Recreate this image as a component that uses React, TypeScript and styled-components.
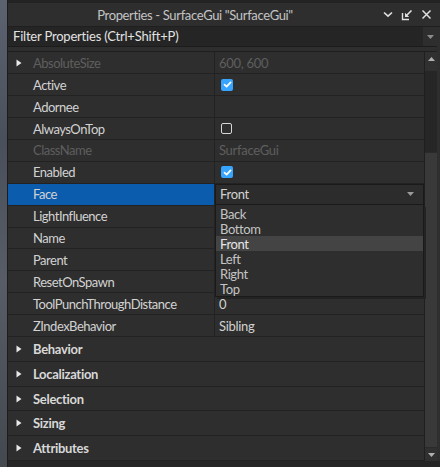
import React, { FC } from "react"
import styled, { createGlobalStyle } from "styled-components"

const GlobalStyle = createGlobalStyle`
  html, body {
    margin: 0;
    padding: 0;
    background: #262626;
    overflow: hidden;
  }
  body {
    font-family: Lato, "Open Sans", sans-serif;
    -webkit-font-smoothing: antialiased;
  }
`

interface PropRow {
  name: string
  value?: string
  check?: boolean
  disabled?: boolean
  expandable?: boolean
  selected?: boolean
  dropdown?: boolean
}

const props: PropRow[] = [
  { name: "AbsoluteSize", value: "600, 600", disabled: true, expandable: true },
  { name: "Active", check: true },
  { name: "Adornee" },
  { name: "AlwaysOnTop", check: false },
  { name: "ClassName", value: "SurfaceGui", disabled: true },
  { name: "Enabled", check: true },
  { name: "Face", value: "Front", selected: true, dropdown: true },
  { name: "LightInfluence" },
  { name: "Name" },
  { name: "Parent" },
  { name: "ResetOnSpawn" },
  { name: "ToolPunchThroughDistance", value: "0" },
  { name: "ZIndexBehavior", value: "Sibling" },
]

const categories = ["Behavior", "Localization", "Selection", "Sizing", "Attributes"]

const faceOptions = ["Back", "Bottom", "Front", "Left", "Right", "Top"]

const Caret: FC<{ color?: string }> = ({ color = "#e8e8e8" }) => (
  <svg width="6" height="8" viewBox="0 0 6 8">
    <path d="M0.5 0.5 L5.5 4 L0.5 7.5 Z" fill={color} />
  </svg>
)

const DownTri: FC<{ color?: string }> = ({ color = "#9a9a9a" }) => (
  <svg width="7" height="4" viewBox="0 0 7 4">
    <path d="M0 0 H7 L3.5 4 Z" fill={color} />
  </svg>
)

const UpTri: FC<{ color?: string }> = ({ color = "#9a9a9a" }) => (
  <svg width="7" height="4" viewBox="0 0 7 4">
    <path d="M0 4 H7 L3.5 0 Z" fill={color} />
  </svg>
)

const CheckBox: FC<{ on: boolean }> = ({ on }) =>
  on ? (
    <CheckOn>
      <svg width="11" height="11" viewBox="0 0 11 11">
        <path
          d="M2.5 5.6 L4.6 7.6 L8.6 3.4"
          stroke="#ffffff"
          strokeWidth="1.7"
          fill="none"
          strokeLinecap="round"
          strokeLinejoin="round"
        />
      </svg>
    </CheckOn>
  ) : (
    <CheckOff />
  )

const App: FC = () => {
  return (
    <Screen>
      <GlobalStyle />
      <Backdrop />
      <Panel>
        <TitleBar>
          <Title>Properties - SurfaceGui "SurfaceGui"</Title>
          <TitleIcons>
            <svg width="10" height="7" viewBox="0 0 10 7">
              <path d="M1 1.5 L5 5.2 L9 1.5" stroke="#e0e0e0" strokeWidth="1.6" fill="none" />
            </svg>
            <svg width="12" height="12" viewBox="0 0 12 12">
              <path d="M1.5 4 V10.5 H8" stroke="#e0e0e0" strokeWidth="1.4" fill="none" />
              <path d="M10.5 1.5 L5 7" stroke="#e0e0e0" strokeWidth="1.6" fill="none" />
              <path d="M4 3.8 V8 H8.2 Z" fill="#e0e0e0" />
            </svg>
            <svg width="11" height="11" viewBox="0 0 11 11">
              <path d="M1.5 1.5 L9.5 9.5 M9.5 1.5 L1.5 9.5" stroke="#e0e0e0" strokeWidth="1.5" fill="none" />
            </svg>
          </TitleIcons>
        </TitleBar>

        <Content>
          <FilterBar>
            <FilterInput>Filter Properties (Ctrl+Shift+P)</FilterInput>
            <FilterArrow>
              <DownTri color="#8a8a8a" />
            </FilterArrow>
          </FilterBar>

          <Body>
            <Grid>
              {props.map((p) => (
                <Row key={p.name}>
                  <NameCell $selected={p.selected}>
                    <Expander>{p.expandable && <Caret />}</Expander>
                    <Label $disabled={p.disabled}>{p.name}</Label>
                  </NameCell>
                  <ValueCell>
                    {p.check !== undefined && <CheckBox on={p.check} />}
                    {p.dropdown ? (
                      <Combo>
                        <Value>{p.value}</Value>
                        <DownTri />
                        <OptionList>
                          {faceOptions.map((o) => (
                            <Option key={o} $active={o === p.value}>
                              {o}
                            </Option>
                          ))}
                        </OptionList>
                      </Combo>
                    ) : (
                      p.value && <Value $disabled={p.disabled}>{p.value}</Value>
                    )}
                  </ValueCell>
                </Row>
              ))}
              {categories.map((c) => (
                <CategoryRow key={c}>
                  <Expander>
                    <Caret />
                  </Expander>
                  <CategoryLabel>{c}</CategoryLabel>
                </CategoryRow>
              ))}
            </Grid>

            <ScrollBar>
              <ScrollButton>
                <UpTri color="#b0b0b0" />
              </ScrollButton>
              <ScrollTrack />
              <ScrollThumb />
              <ScrollButton>
                <DownTri color="#b0b0b0" />
              </ScrollButton>
            </ScrollBar>
          </Body>
        </Content>
      </Panel>
    </Screen>
  )
}

const Screen = styled.div`
  width: 440px;
  height: 467px;
  display: flex;
  background: #252525;
`

const Backdrop = styled.div`
  width: 7px;
  flex: none;
  background: linear-gradient(180deg, #5c6270 0%, #4a505b 30%, #575c66 60%, #44484f 100%);
  border-right: 1px solid #1c1c1c;
`

const Panel = styled.div`
  flex: 1;
  display: flex;
  flex-direction: column;
  background: #2e2e2e;
  border-top: 3px solid #232323;
  height: 458px;
`

const TitleBar = styled.div`
  height: 24px;
  display: flex;
  align-items: center;
  background: #2e2e2e;
  border-bottom: 1px solid #1f1f1f;
`

const Title = styled.div`
  flex: 1;
  text-align: center;
  font-size: 13px;
  color: #c4c4c4;
  letter-spacing: -0.35px;
  padding-left: 6px;
`

const TitleIcons = styled.div`
  display: flex;
  align-items: center;
  gap: 8px;
  padding-right: 8px;
  width: 56px;
  justify-content: flex-end;
`

const Content = styled.div`
  flex: 1;
  display: flex;
  flex-direction: column;
  padding-right: 3px;
`

const FilterBar = styled.div`
  height: 19px;
  display: flex;
  border-bottom: 1px solid #1c1c1c;
  background: #2e2e2e;
`

const FilterInput = styled.div`
  flex: 1;
  background: #252525;
  color: #e2e2e2;
  font-size: 13px;
  line-height: 19px;
  padding-left: 5px;
  letter-spacing: -0.2px;
`

const FilterArrow = styled.div`
  width: 14px;
  display: flex;
  align-items: center;
  justify-content: center;
`

const Body = styled.div`
  margin-top: 4px;
  flex: 1;
  display: flex;
  border-top: 1px solid #1f1f1f;
`

const Grid = styled.div`
  flex: 1;
  display: flex;
  flex-direction: column;
  border-right: 1px solid #1f1f1f;
`

const Row = styled.div`
  height: 21.9px;
  box-sizing: border-box;
  display: grid;
  grid-template-columns: 207px 1fr;
  border-bottom: 1px solid #222222;
  font-size: 13px;
`

const NameCell = styled.div<{ $selected?: boolean }>`
  display: flex;
  align-items: center;
  background: ${(p) => (p.$selected ? "#0b5cad" : "transparent")};
  border-right: 1px solid #222222;
`

const Expander = styled.div`
  width: 25px;
  flex: none;
  display: flex;
  align-items: center;
  padding-left: 8px;
  box-sizing: border-box;
`

const Label = styled.span<{ $disabled?: boolean }>`
  color: ${(p) => (p.$disabled ? "#5e5e5e" : "#d2d2d2")};
  letter-spacing: -0.5px;
  white-space: nowrap;
`

const ValueCell = styled.div`
  position: relative;
  display: flex;
  align-items: center;
  padding-left: 4px;
`

const Value = styled.span<{ $disabled?: boolean }>`
  color: ${(p) => (p.$disabled ? "#5e5e5e" : "#d2d2d2")};
  letter-spacing: -0.3px;
  flex: 1;
`

const CheckOn = styled.div`
  width: 12px;
  height: 12px;
  margin-left: 2px;
  border-radius: 2px;
  background: #37a4ff;
  display: flex;
  align-items: center;
  justify-content: center;
`

const CheckOff = styled.div`
  width: 9px;
  height: 9px;
  margin-left: 2px;
  border-radius: 2px;
  border: 1.5px solid #d6d6d6;
`

const Combo = styled.div`
  position: absolute;
  inset: 0 0 0 0;
  box-sizing: border-box;
  border: 1px solid #1a1a1a;
  background: #2c2c2c;
  display: flex;
  align-items: center;
  padding: 0 9px 0 4px;
`

const OptionList = styled.div`
  position: absolute;
  left: -1px;
  right: -1px;
  top: calc(100% + 1px);
  z-index: 2;
  display: flex;
  flex-direction: column;
  padding-top: 1px;
  background: #2e2e2e;
  border: 1px solid #1a1a1a;
  border-top: none;
  box-shadow: 2px 2px 0 #232323;
`

const Option = styled.div<{ $active?: boolean }>`
  height: 15px;
  line-height: 16px;
  padding-left: 4px;
  font-size: 13px;
  letter-spacing: -0.4px;
  color: ${(p) => (p.$active ? "#e6e6e6" : "#c4c4c4")};
  background: ${(p) => (p.$active ? "#444444" : "transparent")};
`

const CategoryRow = styled.div`
  height: 24.8px;
  box-sizing: border-box;
  display: flex;
  align-items: center;
  border-bottom: 1px solid #222222;
`

const CategoryLabel = styled.span`
  font-size: 13px;
  font-weight: 700;
  color: #d8d8d8;
  letter-spacing: -0.3px;
`

const ScrollBar = styled.div`
  width: 12px;
  display: flex;
  flex-direction: column;
  background: #2a2a2a;
`

const ScrollButton = styled.div`
  height: 13px;
  display: flex;
  align-items: center;
  justify-content: center;
  background: #303030;
  &:first-child {
    height: 19px;
    align-items: flex-start;
    padding-top: 5px;
    box-sizing: border-box;
  }
`

const ScrollTrack = styled.div`
  height: 81px;
  background: #262626;
`

const ScrollThumb = styled.div`
  flex: 1;
  background: #393939;
  border: 1px solid #2a2a2a;
  border-width: 1px 0;
`

export default App
